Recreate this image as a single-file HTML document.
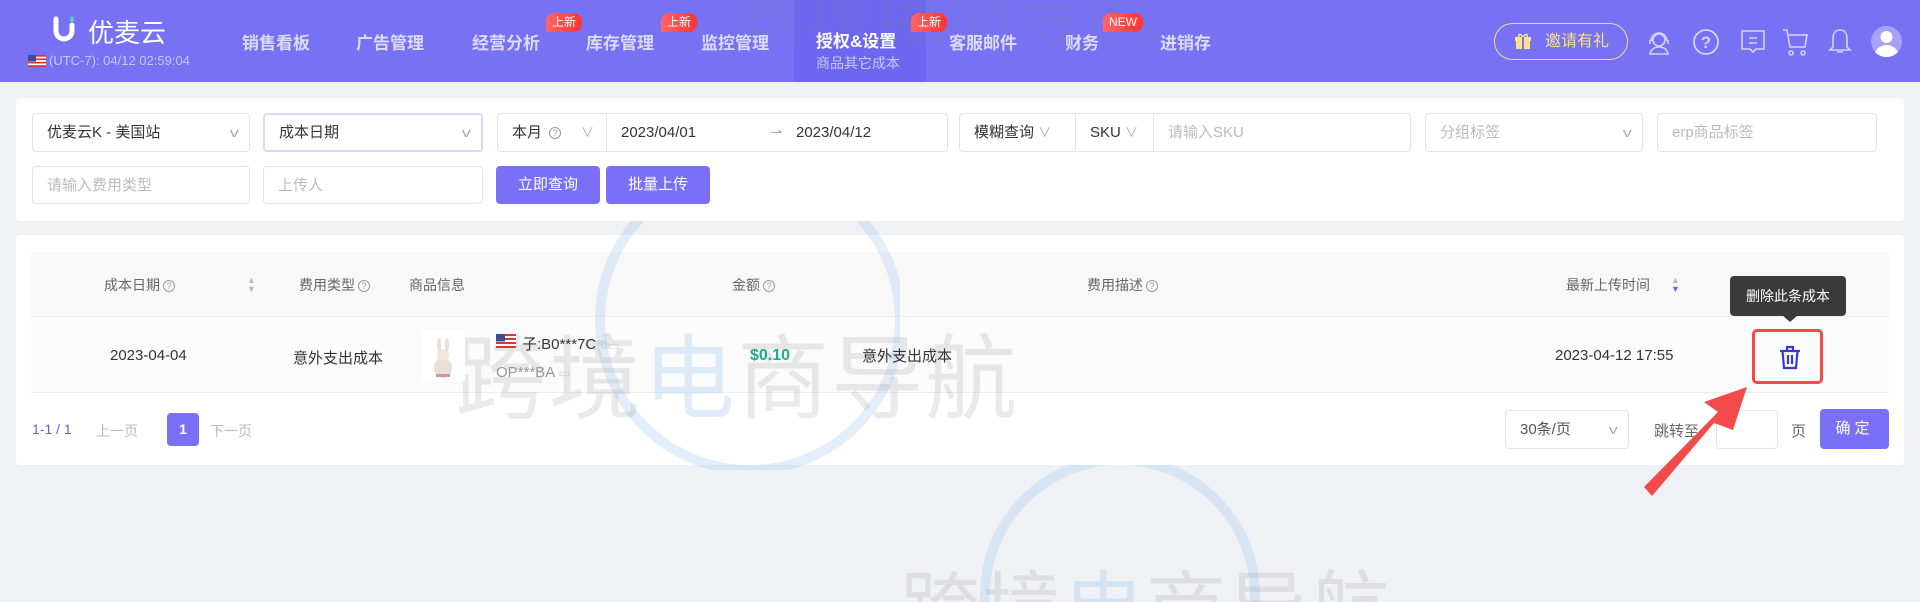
<!DOCTYPE html>
<html><head><meta charset="utf-8"><style>
*{box-sizing:border-box;margin:0;padding:0}
html,body{width:1920px;height:602px;overflow:hidden}
body{background:#f0f1f5;font-family:"Liberation Sans","Noto Sans CJK SC",sans-serif;color:#333}
#w{position:relative;width:1920px;height:602px;overflow:hidden}
.a{position:absolute;white-space:nowrap}
.hd{position:absolute;left:0;top:0;width:1920px;height:82px;background:#7771f4}
.nav{position:absolute;top:29px;font-size:17px;font-weight:bold;color:#dcdaff}
.bd{position:absolute;height:19px;top:13px;padding:0 6px;font-size:12px;line-height:19px;color:#fff;background:linear-gradient(90deg,#f66 0%,#f33 100%);border-radius:8px 8px 8px 0}
.card{position:absolute;background:#fff;border-radius:4px}
.in{position:absolute;border:1px solid #e4e4e8;border-radius:4px;background:#fff;font-size:15px;line-height:37px;padding-left:14px;color:#333}
.ph{color:#bbb}
.ch{position:absolute;right:12px;top:0;color:#aaa;font-size:13px;transform:scaleX(1.4)}
.btn{position:absolute;background:#7b70f5;color:#fff;border-radius:4px;font-size:15px;text-align:center;line-height:38px}
.th{position:absolute;top:275px;font-size:14px;color:#666}
.q{display:inline-block;width:12px;height:12px;border:1px solid #999;border-radius:50%;font-size:9px;line-height:10px;text-align:center;color:#999;vertical-align:1px;margin-left:3px}
.td{position:absolute;font-size:15px;color:#333}
.wm{position:absolute;font-size:92px;color:rgba(150,150,150,.2);letter-spacing:2px}
</style></head><body><div id="w">
<div class="hd"></div>
<div class="a" style="left:794px;top:0;width:132px;height:82px;background:#6d67ef"></div>
<svg class="a" style="left:52px;top:15px" width="30" height="30" viewBox="0 0 30 30"><path d="M4 4v12a8 8 0 0 0 16 0V10" stroke="#fff" stroke-width="5" fill="none" stroke-linecap="round"/><path d="M20 1c-3 3-3 6 0 6s3-3 0-6z" fill="#4ed6c0"/></svg>
<div class="a" style="left:88px;top:13px;font-size:26px;color:#fff">优麦云</div>
<svg class="a" style="left:28px;top:55px" width="18" height="12"><rect width="18" height="12" fill="#fff"/><g fill="#d33"><rect y="0" width="18" height="1.7"/><rect y="3.4" width="18" height="1.7"/><rect y="6.8" width="18" height="1.7"/><rect y="10.2" width="18" height="1.8"/></g><rect width="8" height="6.5" fill="#3b4b9a"/></svg>
<div class="a" style="left:49px;top:53px;font-size:13px;color:#c9c6f8">(UTC-7): 04/12 02:59:04</div>
<div class="a" style="left:735px;top:-42px;font-size:70px;color:rgba(120,120,160,.18)">跨境电商导航</div>
<div class="nav" style="left:242px">销售看板</div>
<div class="nav" style="left:356px">广告管理</div>
<div class="nav" style="left:472px">经营分析</div>
<div class="nav" style="left:586px">库存管理</div>
<div class="nav" style="left:701px">监控管理</div>
<div class="nav" style="left:816px;color:#fff;top:27px">授权&amp;设置</div>
<div class="a" style="left:816px;top:53px;font-size:14px;color:#c9c6f8">商品其它成本</div>
<div class="nav" style="left:949px">客服邮件</div>
<div class="nav" style="left:1065px">财务</div>
<div class="nav" style="left:1160px">进销存</div>
<div class="bd" style="left:546px">上新</div>
<div class="bd" style="left:661px">上新</div>
<div class="bd" style="left:911px">上新</div>
<div class="bd" style="left:1103px">NEW</div>
<div class="a" style="left:1494px;top:23px;width:134px;height:37px;border:1px solid #f3d98a;border-radius:19px;color:#fbe08a;font-size:16px;line-height:35px;padding-left:50px">邀请有礼</div>
<svg class="a" style="left:1515px;top:33px" width="16" height="17"><rect x="1" y="5" width="14" height="11" fill="#fbe08a"/><rect x="0" y="4" width="16" height="4" fill="#fbe08a"/><path d="M8 4C5 0 3 1 4 4M8 4c3-4 5-3 4 0" stroke="#fbe08a" fill="none" stroke-width="1.5"/><rect x="7" y="4" width="2" height="12" fill="#7771f4"/></svg>
<svg class="a" style="left:1645px;top:28px" width="28" height="28" fill="none" stroke="#d6d3ff" stroke-width="1.6"><circle cx="14" cy="12" r="6"/><path d="M6 13a8 8 0 0 1 16 0M5 12v4M23 12v4M5 26c1-5 4-7 9-7s8 2 9 7z"/></svg>
<svg class="a" style="left:1692px;top:28px" width="28" height="28" fill="none" stroke="#d6d3ff" stroke-width="1.8"><circle cx="14" cy="14" r="12"/><text x="14" y="20" font-size="17" font-weight="bold" fill="#d6d3ff" stroke="none" text-anchor="middle" font-family="Liberation Sans">?</text></svg>
<svg class="a" style="left:1739px;top:28px" width="28" height="28" fill="none" stroke="#d6d3ff" stroke-width="1.6"><path d="M3 3h22v18H17l-3 3-3-3H3z"/><path d="M10 10h8M10 15h8"/></svg>
<svg class="a" style="left:1782px;top:28px" width="28" height="28" fill="none" stroke="#d6d3ff" stroke-width="1.6"><path d="M1 2h4l3 17h15l2-12H7M9 23a2 2 0 1 0 0.1 0M21 23a2 2 0 1 0 .1 0"/></svg>
<svg class="a" style="left:1828px;top:28px" width="24" height="28" fill="none" stroke="#d6d3ff" stroke-width="1.6"><path d="M12 2c-5 0-7 4-7 9v8l-3 3h20l-3-3v-8c0-5-2-9-7-9zM9 24h6"/></svg>
<svg class="a" style="left:1871px;top:26px" width="31" height="31"><circle cx="15.5" cy="15.5" r="15.5" fill="#a7a2f5"/><circle cx="15.5" cy="11" r="6" fill="#fff"/><path d="M4 26c3-5 7-7 11.5-7s8.5 2 11.5 7a15.5 15.5 0 0 1-23 0z" fill="#fff"/></svg>

<svg class="a" style="left:520px;top:170px" width="380" height="300" fill="none" stroke="rgba(160,200,240,.3)" stroke-width="10"><circle cx="230" cy="150" r="150"/></svg>
<svg class="a" style="left:980px;top:455px" width="340" height="147" fill="none" stroke="rgba(160,200,240,.3)" stroke-width="10"><circle cx="140" cy="140" r="135"/></svg>

<div class="card" style="left:16px;top:98px;width:1888px;height:123px"></div>
<div class="in" style="left:32px;top:113px;width:218px;height:39px">优麦云K - 美国站<span class="ch">v</span></div>
<div class="in" style="left:263px;top:113px;width:220px;height:39px;border:2px solid #dcd8fb;line-height:35px">成本日期<span class="ch">v</span></div>
<div class="in" style="left:497px;top:113px;width:451px;height:39px">本月 <span class="q">?</span><span class="a" style="left:83px;color:#aaa;font-size:13px">∨</span>
<span class="a" style="left:108px;top:0;width:1px;height:37px;background:#e4e4e8"></span>
<span class="a" style="left:123px">2023/04/01</span><span class="a" style="left:272px;color:#aaa">⇀</span><span class="a" style="left:298px">2023/04/12</span></div>
<div class="in" style="left:959px;top:113px;width:452px;height:39px">模糊查询 <span style="color:#aaa;font-size:13px">∨</span>
<span class="a" style="left:115px;top:0;width:1px;height:37px;background:#e4e4e8"></span>
<span class="a" style="left:130px">SKU <span style="color:#aaa;font-size:13px">∨</span></span>
<span class="a" style="left:193px;top:0;width:1px;height:37px;background:#e4e4e8"></span>
<span class="a ph" style="left:208px">请输入SKU</span></div>
<div class="in ph" style="left:1425px;top:113px;width:218px;height:39px">分组标签<span class="ch">v</span></div>
<div class="in ph" style="left:1657px;top:113px;width:220px;height:39px">erp商品标签</div>
<div class="in ph" style="left:32px;top:166px;width:218px;height:38px">请输入费用类型</div>
<div class="in ph" style="left:263px;top:166px;width:220px;height:38px">上传人</div>
<div class="btn" style="left:496px;top:166px;width:104px;height:38px">立即查询</div>
<div class="btn" style="left:606px;top:166px;width:104px;height:38px">批量上传</div>

<div class="card" style="left:16px;top:235px;width:1888px;height:230px"></div>
<div class="a" style="left:31px;top:252px;width:1858px;height:65px;background:#f8f8f9;border-bottom:1px solid #ececef"></div>
<div class="a" style="left:31px;top:317px;width:1858px;height:76px;background:#fbfbfc;border-bottom:1px solid #ececef"></div>
<svg class="a" style="left:520px;top:235px" width="380" height="230" fill="none" stroke="rgba(160,200,240,.3)" stroke-width="10"><circle cx="230" cy="85" r="150"/></svg>
<div class="th" style="left:104px">成本日期<span class="q">?</span></div>
<div class="a" style="left:247px;top:276px;font-size:9px;color:#bbb;line-height:9px">▲<br>▼</div>
<div class="th" style="left:299px">费用类型<span class="q">?</span></div>
<div class="th" style="left:409px">商品信息</div>
<div class="th" style="left:732px">金额<span class="q">?</span></div>
<div class="th" style="left:1087px">费用描述<span class="q">?</span></div>
<div class="th" style="left:1566px">最新上传时间</div>
<div class="a" style="left:1671px;top:276px;font-size:9px;line-height:9px"><span style="color:#bbb">▲</span><br><span style="color:#6f67f2">▼</span></div>
<div class="th" style="left:1779px">操作</div>

<div class="wm" style="left:455px;top:305px">跨境<span style="color:rgba(150,195,240,.3)">电</span>商导航</div>

<div class="td" style="left:110px;top:347px">2023-04-04</div>
<div class="td" style="left:293px;top:347px">意外支出成本</div>
<div class="a" style="left:421px;top:330px;width:44px;height:51px;background:#fff"></div>
<svg class="a" style="left:428px;top:338px" width="30" height="42"><ellipse cx="15" cy="30" rx="9" ry="10" fill="#e8dfd6"/><circle cx="15" cy="17" r="6" fill="#efe7df"/><ellipse cx="11" cy="7" rx="2" ry="7" fill="#e9e0d8"/><ellipse cx="19" cy="7" rx="2" ry="7" fill="#e9e0d8"/><rect x="8" y="36" width="14" height="3" fill="#c99"/></svg>
<svg class="a" style="left:496px;top:334px" width="20" height="14"><rect width="20" height="14" fill="#fff"/><g fill="#d33"><rect y="0" width="20" height="2"/><rect y="4" width="20" height="2"/><rect y="8" width="20" height="2"/><rect y="12" width="20" height="2"/></g><rect width="9" height="7.5" fill="#3b4b9a"/></svg>
<div class="td" style="left:522px;top:333px">子:B0***7C <span style="color:#ccc;font-size:12px">⧉▭</span></div>
<div class="td" style="left:496px;top:364px;color:#999">OP***BA <span style="color:#ccc;font-size:12px">▭</span></div>
<div class="td" style="left:750px;top:347px;color:#19ad8c;font-weight:bold;font-size:16px">$0.10</div>
<div class="td" style="left:862px;top:345px">意外支出成本</div>
<div class="td" style="left:1555px;top:347px">2023-04-12 17:55</div>
<div class="a" style="left:1752px;top:329px;width:71px;height:55px;border:3px solid #f04a4a;border-radius:5px"></div>
<svg class="a" style="left:1779px;top:344px" width="22" height="26" fill="none" stroke="#3a36d6" stroke-width="2.2"><path d="M1 7h20M8 7V3h6v4M3.5 7l1.5 17h12l1.5-17M9 11v9M13 11v9"/></svg>
<div class="a" style="left:1730px;top:276px;width:116px;height:40px;background:#3a3a3a;border-radius:4px;color:#fff;font-size:14px;text-align:center;line-height:40px">删除此条成本</div>
<div class="a" style="left:1782px;top:315px;width:0;height:0;border:8px solid transparent;border-top:7px solid #3a3a3a"></div>

<div class="a" style="left:32px;top:421px;font-size:14px;color:#6b5fd8">1-1 / 1</div>
<div class="a" style="left:96px;top:421px;font-size:14px;color:#bbb">上一页</div>
<div class="btn" style="left:167px;top:413px;width:32px;height:33px;line-height:33px;font-size:14px;font-weight:bold">1</div>
<div class="a" style="left:210px;top:421px;font-size:14px;color:#bbb">下一页</div>
<div class="in" style="left:1505px;top:410px;width:124px;height:39px;color:#555">30条/页<span class="ch">v</span></div>
<div class="a" style="left:1654px;top:420px;font-size:15px;color:#666">跳转至</div>
<div class="in" style="left:1716px;top:410px;width:62px;height:39px"></div>
<div class="a" style="left:1791px;top:420px;font-size:15px;color:#666">页</div>
<div class="btn" style="left:1820px;top:409px;width:69px;height:40px;line-height:40px;letter-spacing:4px">确定</div>

<div class="wm" style="left:900px;top:545px;font-size:80px">跨境<span style="color:rgba(150,195,240,.3)">电</span>商导航</div>

<svg class="a" style="left:0;top:0" width="1920" height="602"><path d="M1644 487L1652 496L1714 423L1733 430L1747 387L1704 402L1718 412Z" fill="#f34b4b"/></svg>
</div></body></html>
